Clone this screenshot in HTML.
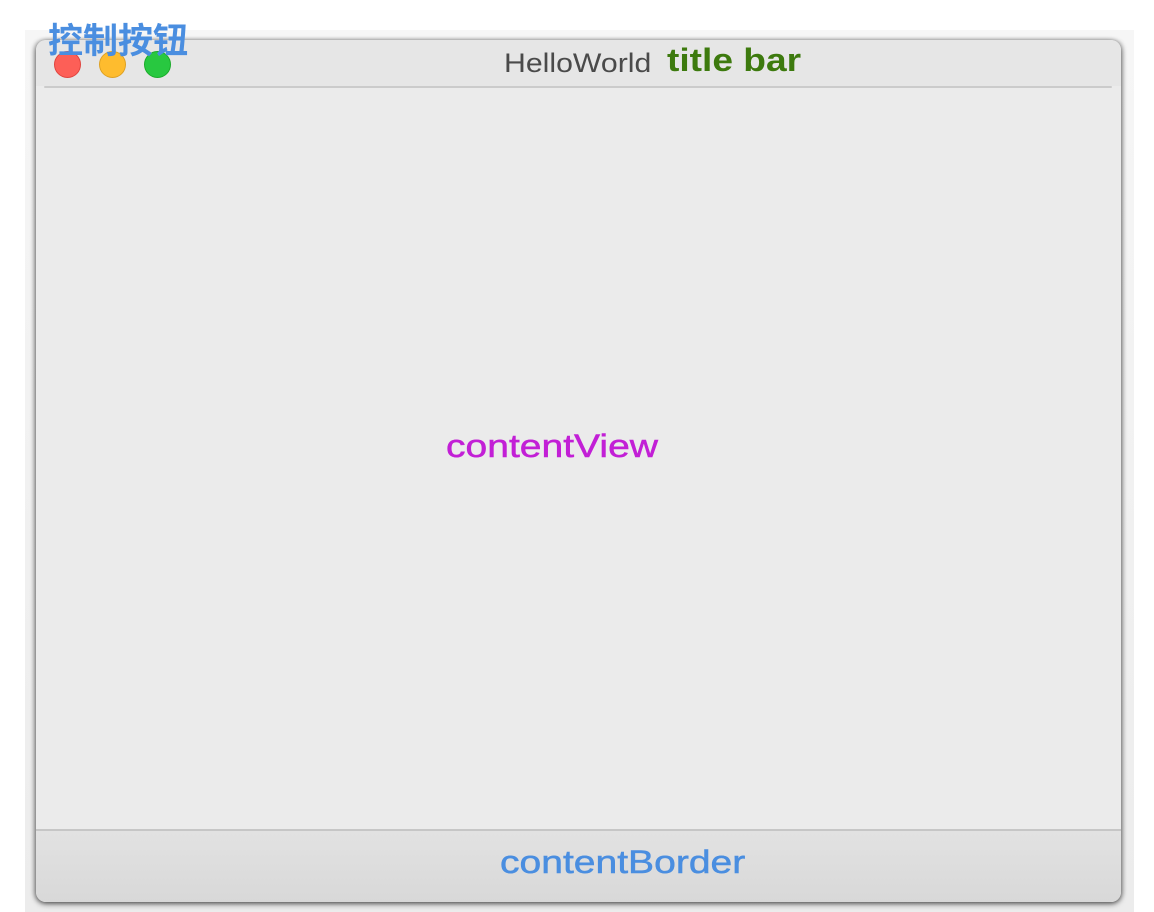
<!DOCTYPE html>
<html><head><meta charset="utf-8"><style>
html,body{margin:0;padding:0;background:#fff;width:1154px;height:912px;overflow:hidden;position:relative;font-family:"Liberation Sans","Noto Sans CJK SC",sans-serif}
.bg{position:absolute;left:25px;top:30px;width:1109px;height:882px;background:linear-gradient(#f6f6f6,#ececec)}
.win{position:absolute;left:36px;top:40px;width:1085px;height:862px;background:#ebebeb;border-radius:10px;box-shadow:0 2px 6px rgba(0,0,0,.55),-2px 0 4px rgba(0,0,0,.2),2px 0 4px rgba(0,0,0,.2);overflow:hidden}
.tb{position:absolute;left:0;top:0;width:100%;height:46px;background:#e6e6e6;}
.sep{position:absolute;left:8px;top:46px;width:1068px;height:2px;background:#cbcbcb;border-radius:1px}
.dot{position:absolute;top:11px;width:26px;height:26px;border-radius:50%}
.foot{position:absolute;left:0;top:789px;width:100%;height:73px;border-top:2px solid #c6c6c6;background:linear-gradient(#e2e2e2,#d8d8d8)}
.t{position:absolute;white-space:nowrap;transform-origin:left top}
</style></head><body>
<div class="bg"></div>
<div class="win">
<div class="tb"></div>
<div class="sep"></div>
<div class="dot" style="left:18px;background:#fd5f57;border:1px solid #e0443e;width:25px;height:25px"></div>
<div class="dot" style="left:63px;background:#febc2e;border:1px solid #dea123;width:25px;height:25px"></div>
<div class="dot" style="left:108px;background:#28c840;border:1px solid #1aab29;width:25px;height:25px"></div>
<div class="foot"></div>
</div>
<div class="t" style="left:48px;top:13px;font-size:35px;font-weight:bold;color:#4a8ee0">控制按钮</div>
<div class="t" style="left:504px;top:48px;font-size:27px;color:#4a4a4a;transform:scaleX(1.12)">HelloWorld</div>
<div class="t" style="left:667px;top:42px;font-size:32px;font-weight:bold;color:#3d7a0e;transform:scaleX(1.16)">title bar</div>
<div class="t" style="left:446px;top:428px;font-size:32px;color:#c21fd6;transform:scaleX(1.22);-webkit-text-stroke:0.5px #c21fd6">contentView</div>
<div class="t" style="left:500px;top:844px;font-size:32px;color:#4a8ee0;transform:scaleX(1.22);-webkit-text-stroke:0.5px #4a8ee0">contentBorder</div>
</body></html>
